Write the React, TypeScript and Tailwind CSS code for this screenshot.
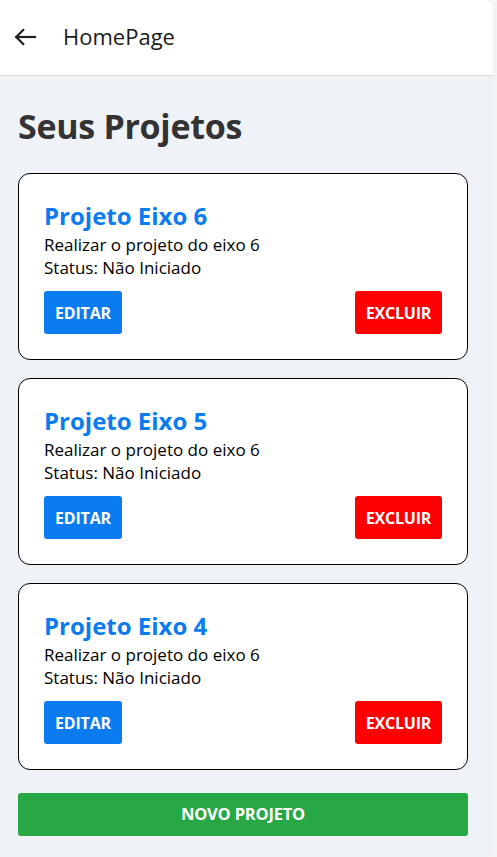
import React from "react";

const projects = [
  { title: "Projeto Eixo 6", desc: "Realizar o projeto do eixo 6", status: "Não Iniciado" },
  { title: "Projeto Eixo 5", desc: "Realizar o projeto do eixo 6", status: "Não Iniciado" },
  { title: "Projeto Eixo 4", desc: "Realizar o projeto do eixo 6", status: "Não Iniciado" },
];

export default function App() {
  return (
    <div className="w-[497px] h-[857px] bg-[#f3f3f3] overflow-hidden" style={{ fontFamily: '"Open Sans", "Noto Sans", sans-serif' }}>
      <div className="w-[493px] h-[857px] bg-[#eff2f7] rounded-r-[8px] overflow-hidden flex flex-col">
        <header className="h-[76px] bg-white border-b border-[#d9d9d9] flex items-center shrink-0">
          <svg className="ml-[14px] -mt-[2px]" width="23" height="20" viewBox="0 0 23 20" fill="none" stroke="#1f1f1f" strokeWidth="2.2" strokeLinecap="square">
            <path d="M2.5 10H21" />
            <path d="M10 2.2L2.2 10l7.8 7.8" strokeLinecap="butt" />
          </svg>
          <span className="ml-[26px] -mt-[2px] text-[22px] font-medium text-[#1a1a1a]">HomePage</span>
        </header>
        <main className="px-[18px] pt-[30px]">
          <h1 className="text-[34px] leading-[40px] font-bold text-[#333] tracking-[-0.3px] mb-[27px]">Seus Projetos</h1>
          <div className="flex flex-col gap-[18px]">
            {projects.map((p) => (
              <div key={p.title} className="w-[450px] h-[187px] bg-white border border-black rounded-[12px] px-[25px] pt-[25px]">
                <h2 className="text-[24px] leading-[34px] font-bold text-[#0a7cf0]">{p.title}</h2>
                <p className="text-[17px] leading-[23px] text-black">{p.desc}</p>
                <p className="text-[17px] leading-[23px] text-black">Status: {p.status}</p>
                <div className="flex justify-between mt-[12px]">
                  <button className="h-[43px] w-[78px] bg-[#0a7cf0] text-white text-[16px] font-bold rounded-[3px] tracking-[-0.2px]">EDITAR</button>
                  <button className="h-[43px] w-[87px] bg-[#ff0000] text-white text-[16px] font-bold rounded-[3px] tracking-[-0.2px]">EXCLUIR</button>
                </div>
              </div>
            ))}
          </div>
          <button className="mt-[23px] w-[450px] h-[43px] bg-[#28a745] text-white text-[16.5px] font-bold rounded-[3px] tracking-[-0.2px]">NOVO PROJETO</button>
        </main>
      </div>
    </div>
  );
}
